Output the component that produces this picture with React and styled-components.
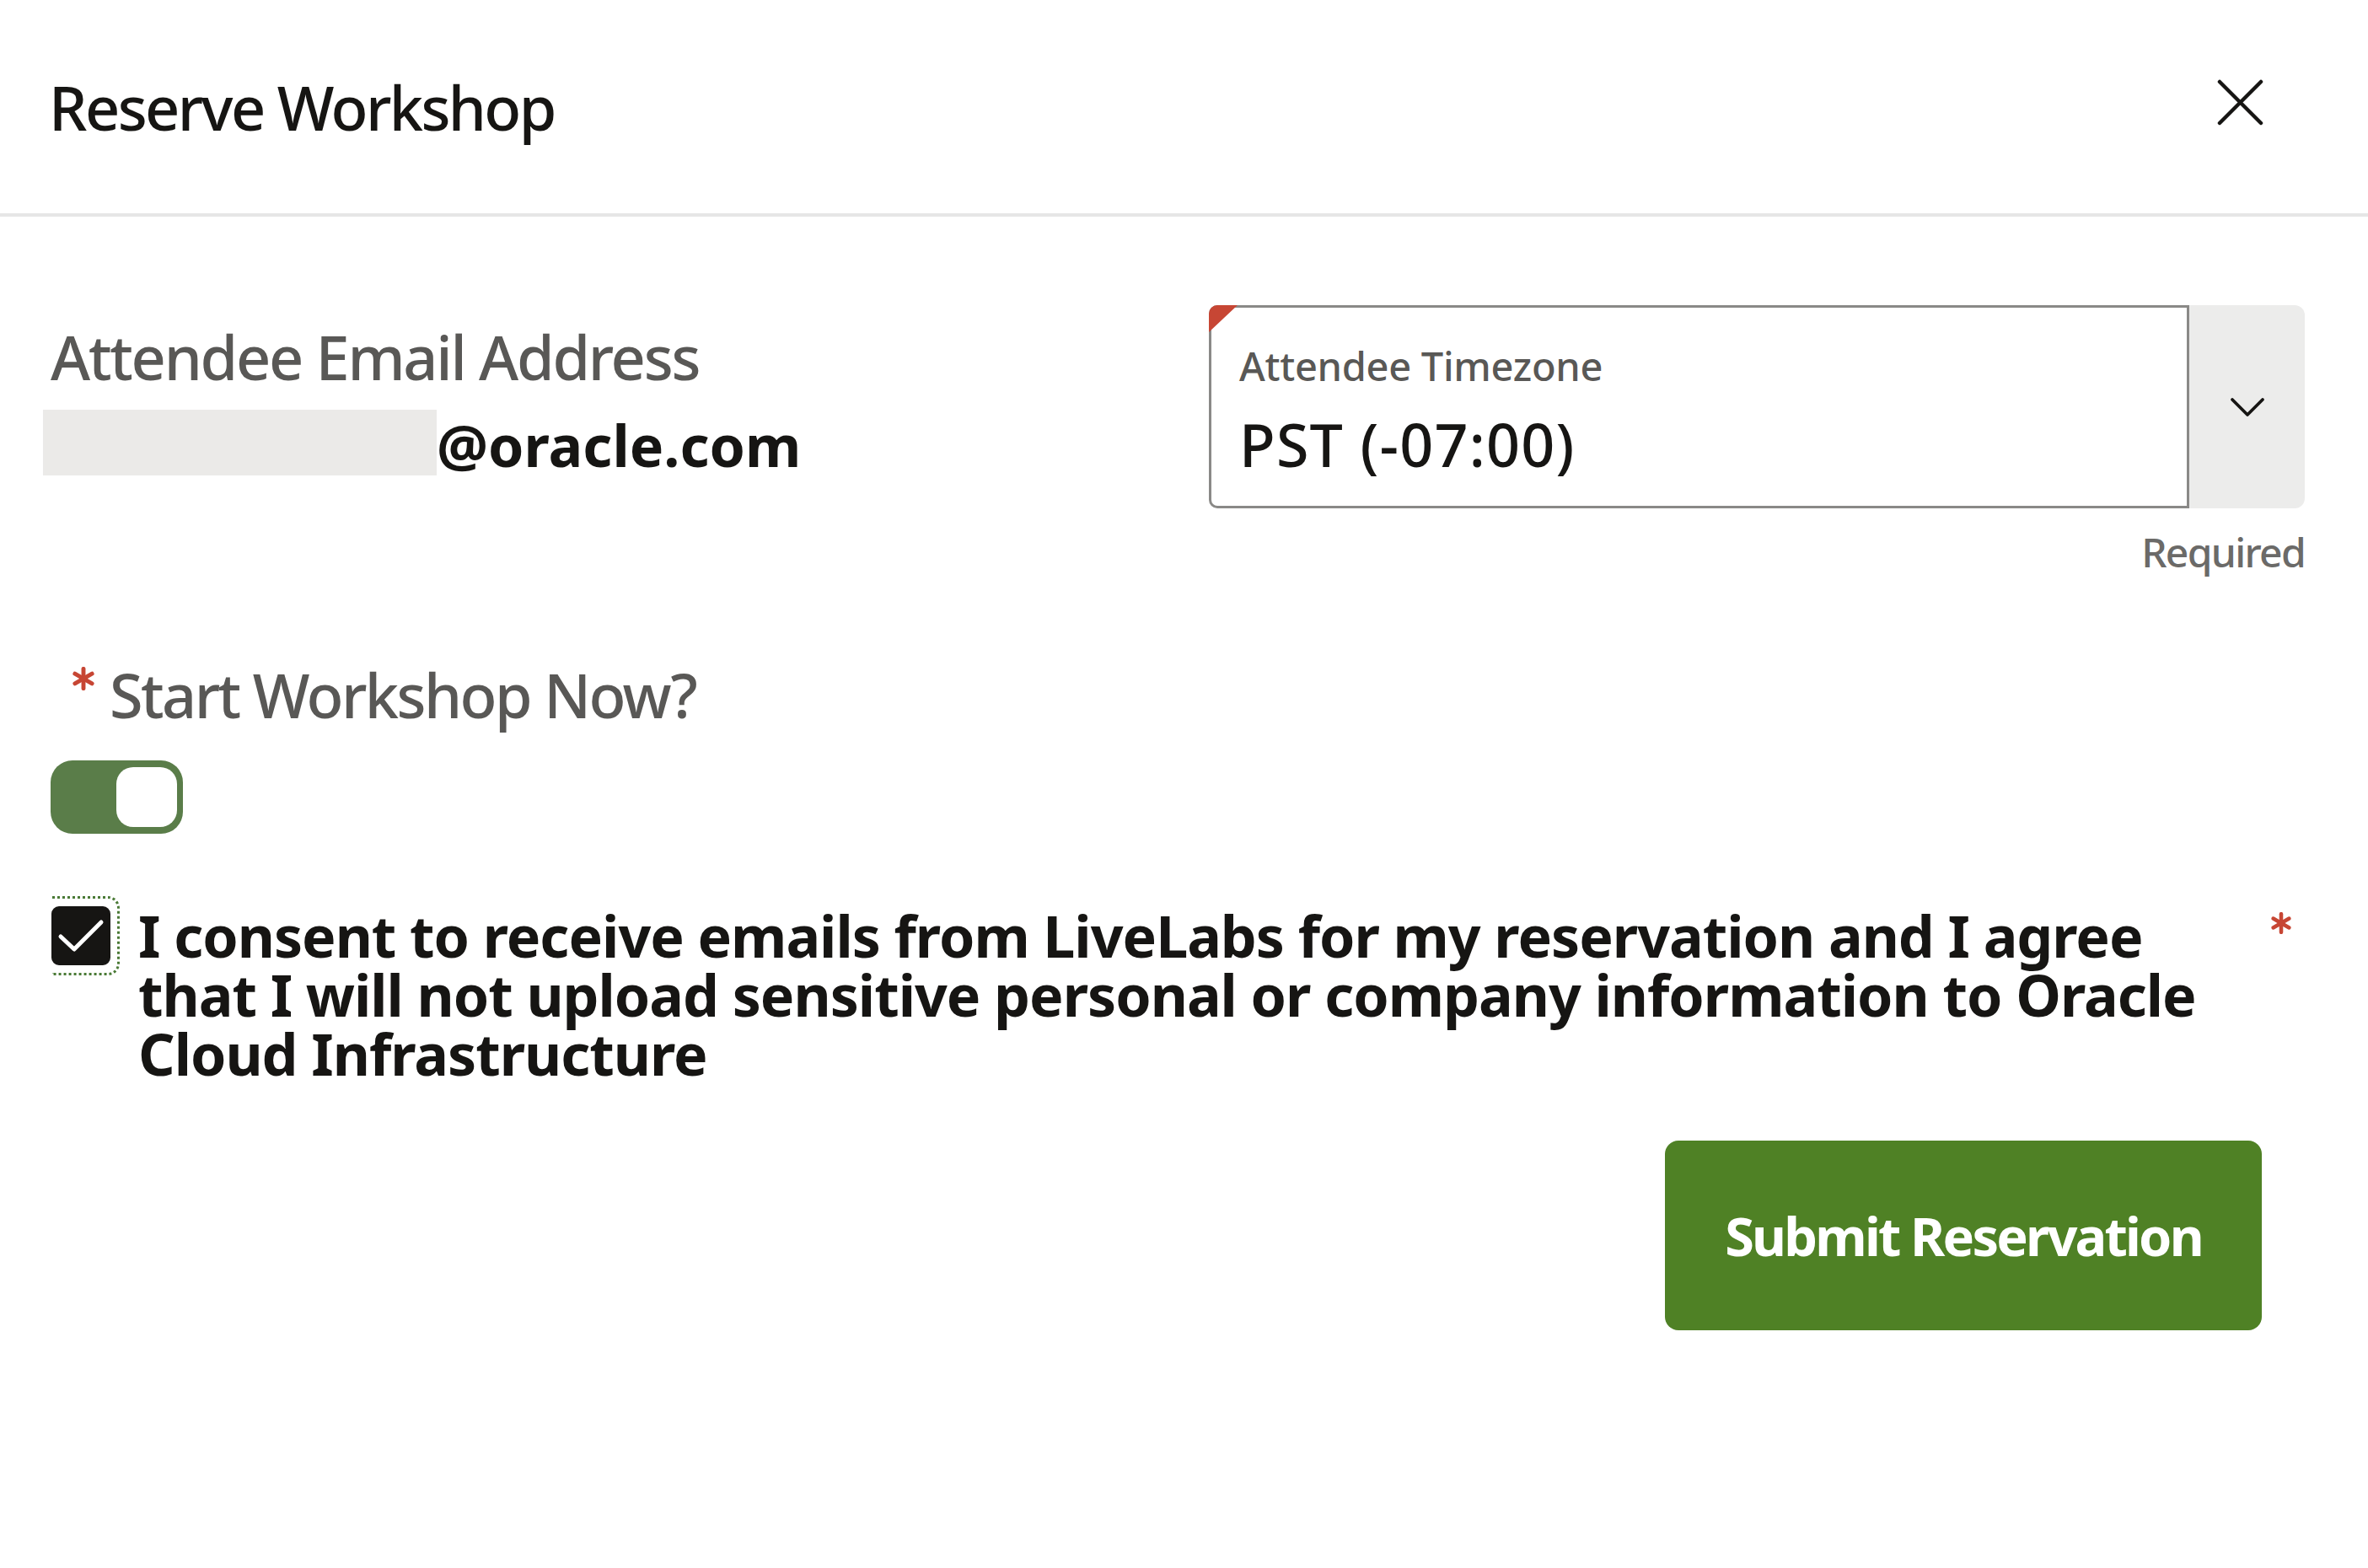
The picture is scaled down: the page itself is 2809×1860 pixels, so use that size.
import styled, { createGlobalStyle } from "styled-components";
import { useState } from "react";

const GlobalStyle = createGlobalStyle`
  html, body {
    margin: 0;
    padding: 0;
    background: #fff;
  }
  body {
    font-family: "Noto Sans", "Open Sans", sans-serif;
    color: #161513;
  }
`;

const Dialog = styled.div`
  width: 2809px;
  min-height: 1860px;
  background: #fff;
`;

const Header = styled.header`
  display: flex;
  align-items: center;
  justify-content: space-between;
  height: 253px;
  padding: 0 124px 0 58px;
  border-bottom: 4px solid #e6e6e6;
`;

const Title = styled.h1`
  margin: 0;
  font-size: 72px;
  font-weight: 500;
  line-height: 1;
  letter-spacing: -2.6px;
  color: #161513;
`;

const CloseButton = styled.button`
  display: flex;
  width: 55px;
  height: 55px;
  padding: 0;
  border: 0;
  background: none;
  cursor: pointer;
  margin-top: -10px;
`;

const Body = styled.div`
  padding: 105px 75px 0 60px;
`;

const TopGrid = styled.div`
  display: grid;
  grid-template-columns: 1fr 1300px;
`;

const EmailField = styled.div`
  padding-top: 18px;
`;

const FieldLabel = styled.div`
  font-size: 72px;
  font-weight: 500;
  line-height: 86px;
  letter-spacing: ${(p) => p.$spacing ?? -2.2}px;
  color: #595856;
`;

const EmailRow = styled.div`
  display: flex;
  margin: 20px 0 0 -9px;
`;

const Redacted = styled.div`
  width: 467px;
  height: 78px;
  background: #ebeae8;
`;

const EmailDomain = styled.div`
  font-size: 68px;
  font-weight: 700;
  line-height: 78px;
  padding-top: 3px;
`;

const TimezoneColumn = styled.div`
  display: flex;
  flex-direction: column;
`;

const SelectBox = styled.div`
  position: relative;
  display: flex;
  height: 241px;
`;

const SelectField = styled.div`
  flex: 1;
  border: 3px solid #8a8987;
  border-radius: 10px 0 0 10px;
  padding: 41px 33px 0;
`;

const RequiredCorner = styled.span`
  position: absolute;
  top: 0;
  left: 0;
  width: 34px;
  height: 32px;
  background: #c74634;
  clip-path: polygon(0 0, 100% 0, 0 100%);
  border-top-left-radius: 10px;
`;

const SelectLabel = styled.div`
  font-size: 47px;
  font-weight: 500;
  line-height: 56px;
  letter-spacing: -0.3px;
  color: #595856;
`;

const SelectValue = styled.div`
  margin-top: 23px;
  font-size: 70px;
  font-weight: 500;
  line-height: 84px;
  letter-spacing: 1.2px;
  color: #161513;
`;

const DropButton = styled.button`
  display: flex;
  align-items: center;
  justify-content: center;
  width: 137px;
  padding: 0;
  border: 0;
  border-radius: 0 12px 12px 0;
  background: #ececeb;
  cursor: pointer;
`;

const HelperText = styled.div`
  margin-top: 23px;
  text-align: right;
  font-size: 48px;
  font-weight: 500;
  line-height: 58px;
  letter-spacing: -1.7px;
  color: #6b6a68;
`;

const ToggleSection = styled.div`
  margin-top: 97px;
`;

const ToggleLabel = styled.div`
  display: flex;
  align-items: flex-start;
  gap: 17px;
  padding-left: 25px;
`;

const Star = styled.svg`
  flex: none;
  margin-top: ${(p) => p.$top || 0}px;
`;

const Switch = styled.button`
  display: flex;
  justify-content: ${(p) => (p.$on ? "flex-end" : "flex-start")};
  width: 157px;
  height: 87px;
  margin-top: 35px;
  padding: 8px 7px;
  border: 0;
  border-radius: 26px;
  background: ${(p) => (p.$on ? "#5a7d49" : "#8a8987")};
  cursor: pointer;
`;

const Knob = styled.span`
  width: 72px;
  height: 71px;
  border-radius: 20px;
  background: #fff;
`;

const ConsentRow = styled.div`
  display: flex;
  align-items: flex-start;
  margin-top: 86px;
`;

const CheckboxWrap = styled.label`
  position: relative;
  flex: none;
  width: 70px;
  height: 70px;
  margin-left: 1px;
  cursor: pointer;
`;

const Checkbox = styled.span`
  display: flex;
  width: 70px;
  height: 70px;
  border-radius: 9px;
  box-sizing: border-box;
  border: 3px solid #161513;
  background: ${(p) => (p.$checked ? "#161513" : "#fff")};
`;

const FocusRing = styled.span`
  position: absolute;
  top: -12px;
  right: -11px;
  bottom: -12px;
  left: 1px;
  border: 3px dotted #4a7a36;
  border-left: 0;
  border-radius: 0 14px 14px 0;
`;

const ConsentText = styled.div`
  flex: 1;
  margin-left: 33px;
  font-size: 68px;
  font-weight: 700;
  line-height: 70px;
  letter-spacing: -1px;
  color: #161513;
`;

const ButtonRow = styled.div`
  display: flex;
  justify-content: flex-end;
  margin-top: 68px;
  padding-right: 51px;
`;

const SubmitButton = styled.button`
  width: 708px;
  height: 225px;
  border: 0;
  border-radius: 16px;
  background: #4f8125;
  color: #fff;
  font-family: "Noto Sans", "Open Sans", sans-serif;
  font-size: 63px;
  font-weight: 700;
  letter-spacing: -2.8px;
  cursor: pointer;
`;

const Asterisk = ({ size, top }) => (
  <Star width={size} height={size} viewBox="0 0 24 24" $top={top}>
    <g stroke="#c74634" strokeWidth="4.2" strokeLinecap="round">
      <line x1="12" y1="2" x2="12" y2="22" />
      <line x1="3.3" y1="7" x2="20.7" y2="17" />
      <line x1="3.3" y1="17" x2="20.7" y2="7" />
    </g>
  </Star>
);

export default function App() {
  const [startNow, setStartNow] = useState(true);
  const [consent, setConsent] = useState(true);

  return (
    <>
      <GlobalStyle />
      <Dialog>
        <Header>
          <Title>Reserve Workshop</Title>
          <CloseButton aria-label="Close">
            <svg width="55" height="55" viewBox="0 0 55 55">
              <path
                d="M3 3 L52 52 M52 3 L3 52"
                stroke="#161513"
                strokeWidth="4.5"
                strokeLinecap="round"
              />
            </svg>
          </CloseButton>
        </Header>

        <Body>
          <TopGrid>
            <EmailField>
              <FieldLabel $spacing={-2.25}>Attendee Email Address</FieldLabel>
              <EmailRow>
                <Redacted />
                <EmailDomain>@oracle.com</EmailDomain>
              </EmailRow>
            </EmailField>

            <TimezoneColumn>
              <SelectBox>
                <SelectField>
                  <SelectLabel>Attendee Timezone</SelectLabel>
                  <SelectValue>PST (-07:00)</SelectValue>
                </SelectField>
                <RequiredCorner />
                <DropButton aria-label="Open timezones">
                  <svg width="42" height="24" viewBox="0 0 42 24">
                    <path
                      d="M3 3 L21 21 L39 3"
                      fill="none"
                      stroke="#161513"
                      strokeWidth="3.8"
                      strokeLinecap="round"
                      strokeLinejoin="round"
                    />
                  </svg>
                </DropButton>
              </SelectBox>
              <HelperText>Required</HelperText>
            </TimezoneColumn>
          </TopGrid>

          <ToggleSection>
            <ToggleLabel>
              <Asterisk size={28} top={10} />
              <FieldLabel $spacing={-2.56}>Start Workshop Now?</FieldLabel>
            </ToggleLabel>
            <Switch $on={startNow} onClick={() => setStartNow(!startNow)}>
              <Knob />
            </Switch>
          </ToggleSection>

          <ConsentRow>
            <CheckboxWrap onClick={() => setConsent(!consent)}>
              <Checkbox $checked={consent}>
                {consent && (
                  <svg width="64" height="64" viewBox="0 0 64 64">
                    <path
                      d="M8 33 L24 48 L56 16"
                      fill="none"
                      stroke="#fff"
                      strokeWidth="5"
                      strokeLinecap="round"
                      strokeLinejoin="round"
                    />
                  </svg>
                )}
              </Checkbox>
              <FocusRing />
            </CheckboxWrap>
            <ConsentText>
              I consent to receive emails from LiveLabs for my reservation and I
              agree that I will not upload sensitive personal or company
              information to Oracle Cloud Infrastructure
            </ConsentText>
            <Asterisk size={26} top={7} />
            <span style={{ width: 15, flex: "none" }} />
          </ConsentRow>

          <ButtonRow>
            <SubmitButton>Submit Reservation</SubmitButton>
          </ButtonRow>
        </Body>
      </Dialog>
    </>
  );
}
